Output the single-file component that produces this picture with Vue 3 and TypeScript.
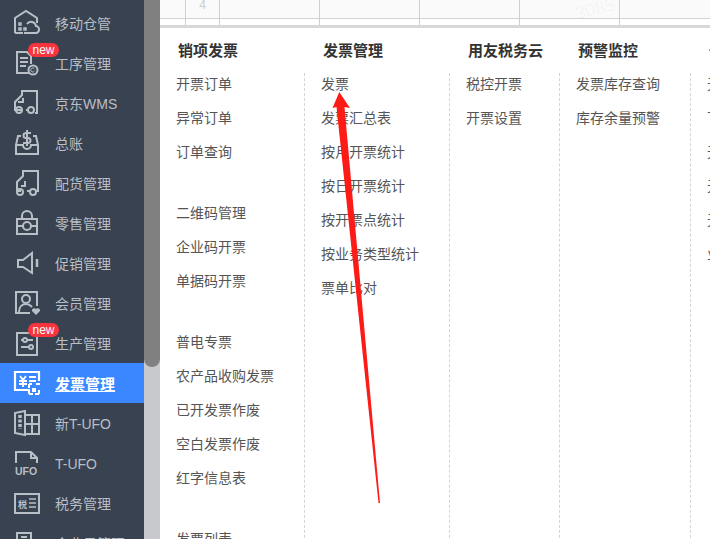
<script setup lang="ts">
interface NavItem { label: string; icon: string; badge?: boolean; active?: boolean }
const nav: NavItem[] = [
  { label: '移动仓管', icon: 'cloud' },
  { label: '工序管理', icon: 'doc', badge: true },
  { label: '京东WMS', icon: 'truck' },
  { label: '总账', icon: 'box' },
  { label: '配货管理', icon: 'truck2' },
  { label: '零售管理', icon: 'shop' },
  { label: '促销管理', icon: 'horn' },
  { label: '会员管理', icon: 'member' },
  { label: '生产管理', icon: 'sliders', badge: true },
  { label: '发票管理', icon: 'invoice', active: true },
  { label: '新T-UFO', icon: 'book' },
  { label: 'T-UFO', icon: 'ufo' },
  { label: '税务管理', icon: 'tax' },
  { label: '企业云管理', icon: 'partner' },
]
interface Col { title: string; cls: string; groups: string[][] }
const cols: Col[] = [
  { title: '销项发票', cls: 'c1', groups: [
    ['开票订单', '异常订单', '订单查询'],
    ['二维码管理', '企业码开票', '单据码开票'],
    ['普电专票', '农产品收购发票', '已开发票作废', '空白发票作废', '红字信息表'],
    ['发票列表'],
  ] },
  { title: '发票管理', cls: 'c2', groups: [
    ['发票', '发票汇总表', '按月开票统计', '按日开票统计', '按开票点统计', '按业务类型统计', '票单比对'],
  ] },
  { title: '用友税务云', cls: 'c3', groups: [['税控开票', '开票设置']] },
  { title: '预警监控', cls: 'c4', groups: [['发票库存查询', '库存余量预警']] },
  { title: '一', cls: 'c5', groups: [['无', '下', '无', '无', '无', '业']] },
]
const gridCols = [34, 100, 100, 100, 100, 100]
</script>

<template>
  <div class="page">
    <aside class="side">
      <nav class="nav">
        <a v-for="item in nav" :key="item.label" class="item" :class="{ active: item.active, latin: item.icon === 'ufo' }">
          <span class="ico">
            <svg viewBox="0 0 28 28" width="28" height="28" fill="none" stroke="currentColor" stroke-width="2">
              <template v-if="item.icon === 'cloud'">
                <path d="M2 24V9l11-7 11 7v5M2 24h8" />
                <path d="M11 24h11a3.5 3.5 0 0 0 1-7 5 5 0 0 0-9-2" />
                <path d="M6 14h2v2H6zM6 19h2v2H6zM11 19h2v2h-2z" stroke-width="1.5" />
              </template>
              <template v-else-if="item.icon === 'doc'">
                <path d="M17 24H4V3h10l4 4v8M7 9h8M7 13h8M7 17h6" />
                <circle cx="20" cy="21" r="4.5" />
                <path d="M21.5 20a2 2 0 1 0 0 2" stroke-width="1" />
              </template>
              <template v-else-if="item.icon === 'truck'">
                <path d="M9 21H2v-8l7-7V2h15v22h-2M13 21h3" />
                <circle cx="6" cy="21" r="3" /><circle cx="18" cy="21" r="3" />
                <path d="M5 13h5v-4" />
              </template>
              <template v-else-if="item.icon === 'box'">
                <path d="M8 7H5l-2 9v9h22v-9l-2-9h-3M3 16h7a4 4 0 0 0 8 0h7" />
                <path d="M18 4h-5a2.5 2.5 0 0 0 0 5h2a2.5 2.5 0 0 1 0 5h-5M14 1v16" />
              </template>
              <template v-else-if="item.icon === 'truck2'">
                <path d="M8 22H4v-9l6-6V2h15v20h-2M14 22h3" />
                <circle cx="7" cy="23" r="3" /><circle cx="20" cy="23" r="3" />
                <path d="M12 12v5H8" />
              </template>
              <template v-else-if="item.icon === 'shop'">
                <path d="M4 10h20v15H4zM9 10V7a5 5 0 0 1 10 0v3" />
                <circle cx="14" cy="17" r="4" />
                <path d="M4 17h6M18 17h6" />
              </template>
              <template v-else-if="item.icon === 'horn'">
                <path d="M5 11h5l9-7v20l-9-6H5z" />
                <path d="M24 10v8" stroke-width="2.5" />
              </template>
              <template v-else-if="item.icon === 'member'">
                <path d="M17 24H3V3h21v14" />
                <circle cx="13" cy="10" r="4" />
                <path d="M6 23c0-5 3-8 7-8s5 2 6 3" />
                <path d="M23 26l-4-4a2.3 2.3 0 0 1 4-2 2.3 2.3 0 0 1 4 2z" fill="currentColor" stroke="none" />
              </template>
              <template v-else-if="item.icon === 'sliders'">
                <path d="M4 4h20v22H4z" />
                <path d="M8 11h12M8 18h12" />
                <circle cx="12" cy="11" r="2" fill="#384250" /><circle cx="18" cy="18" r="2" fill="#384250" />
              </template>
              <template v-else-if="item.icon === 'invoice'">
                <path d="M17 21H2V3h24v9" stroke-width="2.2" />
                <path d="M7 7l3 4 3-4M6 12h8M6 15h8M10 11v7M16 8h7M16 12h7" stroke-width="1.8" />
                <path d="M16 15h3M23 15h3v3M16 25h10M16 15v10M26 21v4M19 20h4M19 22h4" stroke-dasharray="4 2" />
              </template>
              <template v-else-if="item.icon === 'book'">
                <path d="M2 4l10-2v24L2 24zM12 6h14v19H12M19 6v19M12 15h14" />
                <path d="M7 6v14" stroke-width="3.5" stroke-dasharray="3 1.5" />
              </template>
              <template v-else-if="item.icon === 'ufo'">
                <path d="M3 14V3h15l6 6v5" />
                <path d="M18 3v6h6" />
                <text x="2" y="25.5" class="ufo-t">UFO</text>
              </template>
              <template v-else-if="item.icon === 'tax'">
                <path d="M2 5h24v19H2z" />
                <text x="5" y="19" class="tax-t">税</text>
                <path d="M16 10h7M16 14h7M16 18h7" stroke-width="1.5" />
              </template>
              <template v-else>
                <path d="M4 4h14v10H4zM4 14v10" />
                <path d="M8 8h6" />
              </template>
            </svg>
          </span>
          <span v-if="item.badge" class="badge">new</span>
          <span class="label">{{ item.label }}</span>
        </a>
      </nav>
      <div class="scroll"><div class="thumb"></div></div>
    </aside>

    <main class="main">
      <div class="table">
        <div class="tcell num" :style="{ width: gridCols[0] + 'px' }">4</div>
        <div v-for="(w, i) in gridCols.slice(1)" :key="i" class="tcell" :style="{ width: w + 'px' }"></div>
        <span class="mark">3085</span>
      </div>
      <div class="panel">
        <section v-for="col in cols" :key="col.title" class="col" :class="col.cls">
          <h3 class="title">{{ col.title }}</h3>
          <div class="links">
            <ul v-for="(g, i) in col.groups" :key="i" class="group">
              <li v-for="(l, j) in g" :key="j">{{ l }}</li>
            </ul>
          </div>
        </section>
      </div>
      <svg class="arrow" viewBox="0 0 710 539" width="710" height="539">
        <path d="M339.3 92 L350 108 L344.5 107 L380 503 L378.5 503 L336.5 107 L332.5 108 Z" fill="#fd1b17" />
      </svg>
    </main>
  </div>
</template>

<style>
html, body { margin: 0; background: #fff; overflow: hidden; }
</style>

<style scoped>
.page { width: 710px; height: 539px; display: flex; overflow: hidden; position: relative; font-family: "Liberation Sans", "Noto Sans CJK SC", sans-serif; font-size: 14px; }
.side { width: 160px; flex: none; display: flex; background: #384250; height: 539px; overflow: hidden; }
.nav { width: 144px; flex: none; padding-top: 3px; display: flex; flex-direction: column; }
.item { height: 40px; flex: none; display: flex; align-items: center; position: relative; color: #b9bfc7; }
.item.active { background: #3a87ff; color: #fff; }
.item.active .label { font-weight: 700; font-size: 15px; text-decoration: underline; }
.item.latin .label { margin-top: 2px; }
.ico { width: 28px; height: 28px; margin-left: 13px; margin-right: 14px; display: flex; }
.label { white-space: nowrap; }
.badge { position: absolute; left: 28px; top: 0; height: 14px; line-height: 14px; width: 31px; border-radius: 7px; background: #f9343f; color: #fff; font-size: 12px; text-align: center; }
.scroll { width: 16px; flex: none; background: #c8c9cc; }
.thumb { height: 367px; background: #808080; border-radius: 0 0 8px 8px; }
.ufo-t { font: 700 10.5px "Liberation Sans", sans-serif; fill: currentColor; stroke: none; }
.tax-t { font: 700 9px "Noto Sans CJK SC", sans-serif; fill: currentColor; stroke: none; }
.main { flex: 1; min-width: 0; position: relative; }
.table { height: 18px; padding-left: 25px; display: flex; border-bottom: 1px solid #d3d3d3; background: #fafafa; position: relative; }
.tcell { height: 25px; flex: none; box-sizing: border-box; border-left: 1px solid #cfcfcf; }
.num { color: #ccc; font-size: 12px; text-align: center; line-height: 10px; }
.mark { position: absolute; left: 415px; top: 0; font-size: 18px; line-height: 18px; color: rgba(0, 0, 0, 0.035); transform: rotate(-14deg); }
.panel { margin-top: 6px; border-top: 3px solid #d8d8d8; position: relative; z-index: 1; background: #fff; height: 512px; display: flex; }
.col { flex: none; box-sizing: border-box; }
.c1 { width: 144px; }
.c2 { width: 145px; }
.c3 { width: 110px; }
.c4 { width: 131px; }
.c5 { width: 40px; }
.title { margin: 0; padding-left: 19px; font-size: 15px; font-weight: 700; color: #333; height: 45px; line-height: 45px; white-space: nowrap; }
.c1 .title { padding-left: 18px; }
.links { display: flow-root; border-left: 1px dashed #d4d4d4; height: 470px; padding-left: 16px; }
.c1 .links { border-left-color: transparent; padding-left: 15px; }
.group { list-style: none; margin: 0 0 27px; padding: 0; }
.group:first-child { margin-top: -6px; }
.group li { height: 34px; line-height: 34px; color: #555; font-size: 14px; white-space: nowrap; }
.arrow { position: absolute; left: -160px; top: 0; z-index: 2; pointer-events: none; }
</style>
